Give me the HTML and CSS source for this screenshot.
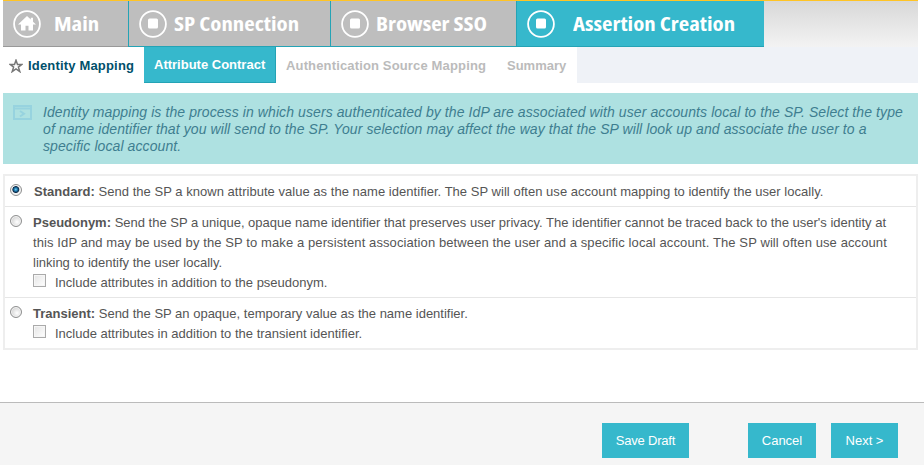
FILE: index.html
```html
<!DOCTYPE html>
<html lang="en">

<head>
    <meta charset="UTF-8">
    <meta name="viewport" content="width=device-width, initial-scale=1.0">
    <link rel="stylesheet" href="styles.css">
    <title>Assertion Creation | Identity Mapping</title>
</head>

<body>
    <main class="page">
        <nav class="tasks">
            <a class="task task-main">
                <svg class="task-icon" viewBox="0 0 28 28">
                    <circle cx="14" cy="14" r="12.9" />
                    <path d="M14 6 L5 14.6 H8 V20.5 H12.5 V15.8 H15.5 V20.5 H20 V14.6 H23 L20 11.8 V7.8 H17.8 V9.6 Z" />
                </svg>
                <span class="task-label">Main</span>
            </a>
            <a class="task task-connection">
                <svg class="task-icon" viewBox="0 0 28 28">
                    <circle cx="14" cy="14" r="12.9" />
                    <rect x="9" y="8.5" width="10" height="10" rx="1.5" />
                </svg>
                <span class="task-label">SP Connection</span>
            </a>
            <a class="task task-browser">
                <svg class="task-icon" viewBox="0 0 28 28">
                    <circle cx="14" cy="14" r="12.9" />
                    <rect x="9" y="8.5" width="10" height="10" rx="1.5" />
                </svg>
                <span class="task-label">Browser SSO</span>
            </a>
            <a class="task task-assertion">
                <svg class="task-icon" viewBox="0 0 28 28">
                    <circle cx="14" cy="14" r="12.9" />
                    <rect x="9" y="8.5" width="10" height="10" rx="1.5" />
                </svg>
                <span class="task-label">Assertion Creation</span>
            </a>
        </nav>

        <nav class="steps">
            <a class="step step-current">
                <svg class="star" viewBox="0 0 14 14">
                    <path d="M7 1.2 L8.5 5.4 H13 L9.4 8.1 L10.8 12.6 L7 9.9 L3.2 12.6 L4.6 8.1 L1 5.4 H5.5 Z" />
                </svg>
                <span>Identity Mapping</span>
            </a>
            <a class="step step-active"><span>Attribute Contract</span></a>
            <a class="step step-source"><span>Authentication Source Mapping</span></a>
            <a class="step step-summary"><span>Summary</span></a>
        </nav>

        <section class="info">
            <svg class="info-icon" viewBox="0 0 19 15">
                <path d="M1 1 H18 V14 H1 Z M1 3.5 H18 M7 6 L11 8.7 L7 11.5" />
            </svg>
            <p>
                Identity mapping is the process in which users authenticated by the IdP are associated with user accounts local to the SP. Select the type<br>
                of name identifier that you will send to the SP. Your selection may affect the way that the SP will look up and associate the user to a<br>
                specific local account.
            </p>
        </section>

        <form class="options">
            <div class="option option-standard">
                <input type="radio" name="mapping" checked>
                <p><b>Standard:</b> Send the SP a known attribute value as the name identifier. The SP will often use account mapping to identify the user locally.</p>
            </div>
            <div class="option option-pseudonym">
                <input type="radio" name="mapping">
                <div>
                    <p>
                        <b>Pseudonym:</b> Send the SP a unique, opaque name identifier that preserves user privacy. The identifier cannot be traced back to the user's identity at<br>
                        <span class="loose">this IdP and may be used by the SP to make a persistent association between the user and a specific local account. The SP will often use account</span><br>
                        linking to identify the user locally.
                    </p>
                    <label><input type="checkbox">Include attributes in addition to the pseudonym.</label>
                </div>
            </div>
            <div class="option option-transient">
                <input type="radio" name="mapping">
                <div>
                    <p><b>Transient:</b> Send the SP an opaque, temporary value as the name identifier.</p>
                    <label><input type="checkbox">Include attributes in addition to the transient identifier.</label>
                </div>
            </div>
        </form>
    </main>

    <footer class="actions">
        <button class="btn btn-save">Save Draft</button>
        <button class="btn btn-cancel">Cancel</button>
        <button class="btn btn-next">Next &gt;</button>
    </footer>
</body>

</html>
```
FILE: styles.css
```css
* {
    box-sizing: border-box;
    margin: 0;
    padding: 0;
}

body {
    display: flex;
    flex-direction: column;
    height: 100vh;
    overflow: hidden;
    font-family: "Liberation Sans", Arial, sans-serif;
    font-size: 13px;
    color: #555;
    background-color: #fff;
}

.page {
    height: 402px;
    margin: 0 6px 0 3px;
}

.tasks {
    display: flex;
    height: 47px;
    border-top: 1px solid #ffc425;
    background: linear-gradient(#d8d8d8, #f3f3f3);
}

.task {
    display: flex;
    align-items: center;
    padding-left: 10px;
    background-color: #bebebe;
    border-bottom: 1px solid #24a3b5;
    border-left: 1px solid #24a3b5;
}

.task-main {
    width: 125px;
    border-left: none;
    border-bottom-color: #999;
}

.task-connection {
    width: 202px;
}

.task-browser {
    width: 186px;
}

.task-assertion {
    width: 248px;
    background-color: #36b8cc;
}

.task-icon {
    flex: none;
    width: 28px;
    height: 28px;
    fill: #fff;
}

.task-icon circle {
    fill: none;
    stroke: #fff;
    stroke-width: 1.8;
}

.task-label {
    font-family: "Open Sans", sans-serif;
    font-size: 20px;
    font-weight: 700;
    line-height: 28px;
    white-space: nowrap;
    color: #fff;
    font-stretch: 75%;
    margin-left: 7px;
    transform: scaleX(1.14);
    transform-origin: left;
}

.task-main .task-label {
    margin-left: 13px;
}

.task-assertion .task-label {
    margin-left: 18px;
}

.steps {
    display: flex;
    height: 36px;
    background-color: #eff2f7;
}

.step {
    display: flex;
    align-items: center;
    padding-left: 10px;
    font-weight: bold;
    white-space: nowrap;
    color: #bbb;
    background-color: #fff;
}

.step-current {
    width: 141px;
    padding-left: 6px;
    letter-spacing: 0.18px;
    color: #00506b;
}

.step-active {
    width: 132px;
    color: #fff;
    background-color: #36b8cc;
    border-right: 1px solid #24a3b5;
    border-bottom: 1px solid #24a3b5;
}

.step-source {
    width: 221px;
    letter-spacing: 0.15px;
}

.step-summary {
    width: 80px;
}

.star {
    width: 14px;
    height: 14px;
    margin: 2px 5px 0 0;
    fill: none;
    stroke: #777;
    stroke-width: 1.5;
}

.info {
    display: flex;
    height: 71px;
    margin-top: 10px;
    padding: 11px 0 0 10px;
    background-color: #aee1e1;
}

.info-icon {
    flex: none;
    width: 19px;
    height: 15px;
    margin: 1px 11px 0 0;
    fill: none;
    stroke: #97d3df;
    stroke-width: 2;
}

.info p {
    font-size: 14px;
    font-style: italic;
    line-height: 17px;
    letter-spacing: 0.09px;
    white-space: nowrap;
    color: #3e7e90;
}

.options {
    height: 176px;
    margin-top: 10px;
    border: 2px solid #eee;
}

.option {
    display: flex;
    line-height: 20px;
    white-space: nowrap;
}

.option + .option {
    border-top: 1px solid #e6e6e6;
}

.option-standard {
    height: 30px;
    padding-top: 6px;
    letter-spacing: 0.03px;
}

.option-pseudonym {
    height: 91px;
    padding-top: 6px;
}

.option-transient {
    padding-top: 6px;
}

.loose {
    letter-spacing: 0.1px;
}

input {
    appearance: none;
    flex: none;
}

input[type="radio"] {
    width: 12px;
    height: 12px;
    margin: 2px 11px 0 5px;
    border: 1px solid #8e8f8f;
    border-radius: 50%;
    background: radial-gradient(circle at 60% 60%, #fff, #d0d0d0 75%);
    box-shadow: inset 0 0 0 1px #f4f4f4;
}

.option-standard input[type="radio"] {
    margin-right: 12px;
}

input[type="radio"]:checked {
    background: radial-gradient(circle at 48% 45%, #7fd4f2 0, #1f7fb5 20%, #0b2a48 40%, #eee 52%);
}

label {
    display: flex;
}

input[type="checkbox"] {
    width: 13px;
    height: 13px;
    margin: 1px 9px 0 0;
    border: 1px solid #aaa;
    background: linear-gradient(135deg, #e4e4e4, #fff);
    box-shadow: inset 0 0 0 1px #f6f6f6;
}

.actions {
    display: flex;
    flex: 1;
    justify-content: flex-end;
    padding: 20px 26px 0 0;
    border-top: 1px solid #bbb;
    background-color: #f5f5f5;
}

.btn {
    height: 35px;
    border: none;
    font-family: inherit;
    font-size: 13px;
    color: #fff;
    background-color: #36b8cc;
}

.btn-save {
    width: 87px;
    margin-right: 59px;
    letter-spacing: -0.2px;
}

.btn-cancel {
    width: 68px;
    margin-right: 15px;
}

.btn-next {
    width: 67px;
}
```
